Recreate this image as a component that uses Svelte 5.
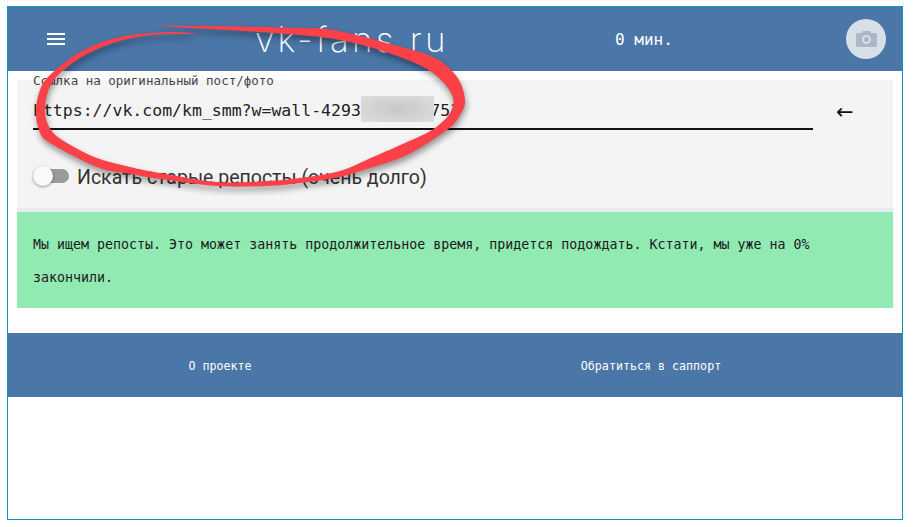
<script lang="ts">
  let link = $state('https://vk.com/km_smm?w=wall-42930000000753')
  let oldReposts = $state(false)
  let percent = $state(0)

  // hand traced brush stroke, two contours between the two sharp tips
  const outer = [
    [153, 26], [210, 26], [300, 28], [333, 30], [383, 42], [433, 57], [457, 77], [465, 100], [460, 115],
    [447, 130], [407, 155], [373, 167], [340, 177], [300, 183], [267, 186], [217, 186], [160, 179], [130, 174],
    [97, 167], [50, 143], [39, 130], [36, 110], [40, 90], [50, 75], [80, 52], [120, 37], [170, 32], [200, 34]
  ]
  const inner = [
    [200, 34], [153, 35], [113, 43], [77, 60], [52, 83], [45, 110], [51, 130], [67, 143], [97, 158],
    [130, 167], [160, 173], [217, 182], [267, 181], [300, 178], [340, 171], [373, 157], [407, 142], [432, 130],
    [450, 113], [452, 95], [433, 73], [400, 57], [350, 42], [300, 35], [210, 29], [153, 26]
  ]

  function smooth(pts: number[][]): string {
    let d = ''
    for (let i = 0; i < pts.length - 1; i++) {
      const p0 = pts[i - 1] ?? pts[i]
      const p1 = pts[i]
      const p2 = pts[i + 1]
      const p3 = pts[i + 2] ?? p2
      const c1 = [p1[0] + (p2[0] - p0[0]) / 6, p1[1] + (p2[1] - p0[1]) / 6]
      const c2 = [p2[0] - (p3[0] - p1[0]) / 6, p2[1] - (p3[1] - p1[1]) / 6]
      d += `C${c1[0].toFixed(1)} ${c1[1].toFixed(1)} ${c2[0].toFixed(1)} ${c2[1].toFixed(1)} ${p2[0]} ${p2[1]}`
    }
    return d
  }

  const stroke = `M153 26${smooth(outer)}${smooth(inner)}Z`
</script>

<div class="page">
  <header class="top">
    <button type="button" class="burger" aria-label="Меню"><span></span><span></span><span></span></button>
    <div class="logo">vk-fans.ru</div>
    <div class="timer">0 мин.</div>
    <div class="avatar">
      <svg viewBox="0 0 21 16" width="21" height="16" aria-hidden="true">
        <path fill="#a9b7c6" fill-rule="evenodd" d="M7 0 5.500 2H1.500A1.500 1.500 0 0 0 0 3.500v11A1.500 1.500 0 0 0 1.500 16h18a1.500 1.500 0 0 0 1.500-1.500v-11A1.500 1.500 0 0 0 19.500 2h-4L14 0H7zm3.500 13a4.500 4.500 0 1 1 0-9 4.500 4.500 0 0 1 0 9zm0-2a2.500 2.500 0 1 0 0-5 2.500 2.500 0 0 0 0 5z" />
      </svg>
    </div>
  </header>

  <main class="content">
    <section class="form">
      <div class="link-row">
        <div class="field">
          <label for="link">Ссылка на оригинальный пост/фото</label>
          <input id="link" type="text" bind:value={link} />
        </div>
        <span class="arrow">←</span>
      </div>
      <label class="toggle">
        <input type="checkbox" bind:checked={oldReposts} />
        <span class="track"><span class="thumb"></span></span>
        <span class="toggle-text">Искать старые репосты (очень долго)</span>
      </label>
    </section>
    <p class="notice">Мы ищем репосты. Это может занять продолжительное время, придется подождать. Кстати, мы уже на {percent}% закончили.</p>
  </main>

  <footer class="bottom">
    <a href="#about">О проекте</a>
    <a href="#support">Обратиться в саппорт</a>
  </footer>

  <div class="blur"></div>
  <svg class="scribble" viewBox="0 0 913 527" width="913" height="527" aria-hidden="true">
    <path fill="#fb4148" d={stroke} />
  </svg>
</div>

<style>
  :global(body) {
    margin: 0;
    background: #fff;
  }

  .page {
    position: relative;
    box-sizing: border-box;
    width: 896px;
    height: 514px;
    margin: 6px 0 0 7px;
    border: 1px solid #1394c4;
    font-family: "DejaVu Sans Mono", monospace;
    overflow: hidden;
  }

  .top {
    height: 64px;
    background: #4a76a8;
    display: flex;
    align-items: center;
    color: #fff;
  }

  .burger {
    margin-left: 39px;
    width: 18px;
    padding: 0;
    background: none;
    border: 0;
    display: flex;
    flex-direction: column;
    gap: 3px;
  }

  .burger span {
    height: 2px;
    background: #fff;
  }

  .logo {
    margin-left: 190px;
    width: 190px;
    font-family: Inter, sans-serif;
    font-weight: 200;
    font-size: 35px;
    letter-spacing: 3.3px;
    white-space: nowrap;
  }

  .timer {
    margin-left: 170px;
    font-size: 16px;
  }

  .avatar {
    margin-left: auto;
    margin-right: 16px;
    width: 40px;
    height: 40px;
    border-radius: 50%;
    background: #d7dfe7;
    display: flex;
    align-items: center;
    justify-content: center;
  }

  .content {
    padding: 9px 9px 25px;
  }

  .form {
    background: #f4f4f4;
    border-bottom: 4px solid #e8ebf1;
    height: 128px;
    padding: 0 16px;
  }

  .link-row {
    display: flex;
    align-items: flex-start;
  }

  .field {
    width: 780px;
    height: 48px;
    box-sizing: content-box;
    border-bottom: 2px solid #111;
  }

  .field label {
    display: block;
    font-size: 12.5px;
    color: #444;
    line-height: 15px;
    margin-top: -7px;
  }

  .field input {
    display: block;
    width: 100%;
    box-sizing: border-box;
    margin-top: 11px;
    padding: 0;
    border: 0;
    outline: none;
    background: transparent;
    color: #222;
    font-family: inherit;
    font-size: 16.5px;
    line-height: 24px;
  }

  .arrow {
    margin: 19px 0 0 23px;
    font-family: "DejaVu Sans", sans-serif;
    font-size: 21px;
    line-height: 26px;
    color: #111;
  }

  .toggle {
    margin-top: 33px;
    display: flex;
    align-items: center;
    gap: 8px;
    font-family: Roboto, sans-serif;
    font-size: 19.5px;
    color: #333;
  }

  .toggle-text {
    margin-top: 3px;
  }

  .toggle input {
    display: none;
  }

  .track {
    position: relative;
    width: 36px;
    height: 14px;
    border-radius: 7px;
    background: #9a9a9a;
  }

  .thumb {
    position: absolute;
    left: 0;
    top: -3px;
    width: 20px;
    height: 20px;
    border-radius: 50%;
    background: #fafafa;
    box-shadow: 0 1px 3px rgba(0, 0, 0, 0.4);
  }

  .notice {
    margin: 0;
    background: #92eab3;
    padding: 16px 16px 14px;
    font-size: 13.3px;
    line-height: 33px;
    color: #1a1a1a;
    height: 66px;
  }

  .bottom {
    height: 64px;
    background: #4a76a8;
    display: grid;
    grid-template-columns: 424px 438px;
    align-items: center;
    justify-items: center;
  }

  .bottom a {
    color: #fff;
    font-size: 11.66px;
    line-height: 16px;
    padding-top: 1px;
    text-decoration: none;
  }

  .blur {
    position: absolute;
    left: 353px;
    top: 89px;
    width: 73px;
    height: 26px;
    background: radial-gradient(ellipse, #c8c8c8, #dedede);
  }

  .scribble {
    position: absolute;
    left: -8px;
    top: -7px;
    filter: drop-shadow(1px 4px 3px rgba(0, 0, 0, 0.4));
  }
</style>
